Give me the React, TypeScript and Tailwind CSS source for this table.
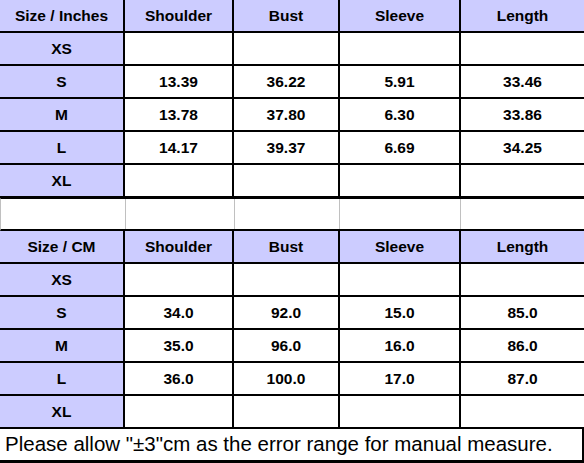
import React from "react";

const cols = ["w-[125px]", "w-[109px]", "w-[106px]", "w-[121px]", "w-[123px]"];

const inches = [
  ["XS", "", "", "", ""],
  ["S", "13.39", "36.22", "5.91", "33.46"],
  ["M", "13.78", "37.80", "6.30", "33.86"],
  ["L", "14.17", "39.37", "6.69", "34.25"],
  ["XL", "", "", "", ""],
];

const cm = [
  ["XS", "", "", "", ""],
  ["S", "34.0", "92.0", "15.0", "85.0"],
  ["M", "35.0", "96.0", "16.0", "86.0"],
  ["L", "36.0", "100.0", "17.0", "87.0"],
  ["XL", "", "", "", ""],
];

function Row({ cells, header }: { cells: string[]; header?: boolean }) {
  return (
    <div className="flex h-[33px] border-b-2 border-black">
      {cells.map((c, i) => (
        <div
          key={i}
          className={`${cols[i]} flex items-center justify-center pt-[1px] ${
            i < 4 ? "border-r-2 border-black" : ""
          } ${header || i === 0 ? "bg-[#ccccff]" : "bg-white"}`}
        >
          {c}
        </div>
      ))}
    </div>
  );
}

export default function App() {
  return (
    <div
      className="w-[584px] h-[463px] bg-white text-black font-bold text-[15.5px] overflow-hidden"
      style={{ fontFamily: '"Liberation Sans", Arial, sans-serif' }}
    >
      <Row header cells={["Size / Inches", "Shoulder", "Bust", "Sleeve", "Length"]} />
      {inches.map((r) => (
        <Row key={r[0]} cells={r} />
      ))}
      <div className="flex h-[33px] border-t border-b-2 border-black border-l border-l-[#c0c0c0]">
        {cols.map((w, i) => (
          <div key={i} className={`${w} ${i < 4 ? "border-r border-[#c0c0c0]" : ""}`} />
        ))}
      </div>
      <Row header cells={["Size / CM", "Shoulder", "Bust", "Sleeve", "Length"]} />
      {cm.map((r) => (
        <Row key={r[0]} cells={r} />
      ))}
      <div className="h-[34px] flex items-center pl-[5px] font-normal text-[20.5px] border-b-[3px] border-r-2 border-black">
        Please allow "±3"cm as the error range for manual measure.
      </div>
    </div>
  );
}
